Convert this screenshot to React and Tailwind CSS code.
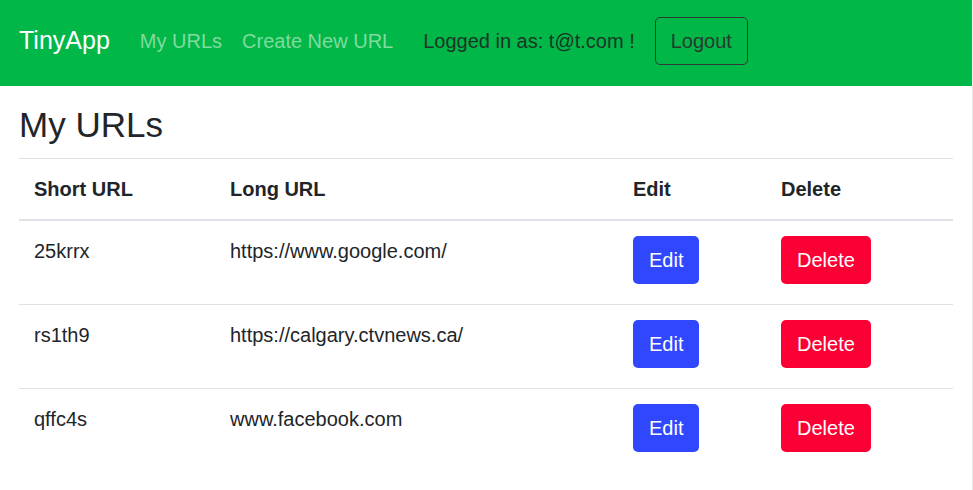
const urls = [
  { id: '25krrx', longURL: 'https://www.google.com/' },
  { id: 'rs1th9', longURL: 'https://calgary.ctvnews.ca/' },
  { id: 'qffc4s', longURL: 'www.facebook.com' },
];

export default function App() {
  return (
    <div className="flex min-h-screen bg-white font-['Liberation_Sans',Arial,sans-serif] text-[20px] leading-[1.5] text-[#212529]">
      <div className="flex-1">
        {/* Navbar */}
        <nav className="flex h-[86px] items-center bg-[#00b748] pl-[19px] pb-[4px]">
          <a href="#" className="mr-[20px] text-[25px] leading-[1.5] text-white">TinyApp</a>
          <a href="#" className="px-[10px] text-[#80db9f]">My URLs</a>
          <a href="#" className="px-[10px] text-[#80db9f]">Create New URL</a>
          <span className="ml-[20px] text-[#1b3526]">Logged in as: t@t.com !</span>
          <button className="ml-[20px] h-[48px] rounded-[5px] border border-[#2e3a33] px-[15px] text-[20px] text-[#263a2e]">
            Logout
          </button>
        </nav>

        {/* Content */}
        <main className="px-[19px] pt-[18px]">
          <h1 className="mb-[12px] text-[35px] leading-[42px] font-normal">My URLs</h1>
          <table className="w-full table-fixed border-collapse">
            <colgroup>
              <col className="w-[196px]" />
              <col className="w-[403px]" />
              <col className="w-[148px]" />
              <col />
            </colgroup>
            <thead>
              <tr>
                <th className="border-t border-b-2 border-[#dee2e6] px-[15px] py-[15px] text-left font-bold">Short URL</th>
                <th className="border-t border-b-2 border-[#dee2e6] px-[15px] py-[15px] text-left font-bold">Long URL</th>
                <th className="border-t border-b-2 border-[#dee2e6] px-[15px] py-[15px] text-left font-bold">Edit</th>
                <th className="border-t border-b-2 border-[#dee2e6] px-[15px] py-[15px] text-left font-bold">Delete</th>
              </tr>
            </thead>
            <tbody>
              {urls.map((url, idx) => (
                <tr key={url.id} className={idx > 0 ? 'border-t border-[#dee2e6]' : ''}>
                  <td className="px-[15px] pt-[15px] pb-[20px] align-top">{url.id}</td>
                  <td className="px-[15px] pt-[15px] pb-[20px] align-top">{url.longURL}</td>
                  <td className="px-[15px] pt-[15px] pb-[20px] align-top">
                    <button className="block h-[48px] rounded-[5px] border border-transparent bg-[#3047ff] px-[15px] text-[20px] text-white">Edit</button>
                  </td>
                  <td className="px-[15px] pt-[15px] pb-[20px] align-top">
                    <button className="block h-[48px] rounded-[5px] border border-transparent bg-[#fb0034] px-[15px] text-[20px] text-white">Delete</button>
                  </td>
                </tr>
              ))}
            </tbody>
          </table>
        </main>
      </div>
      <div className="flex w-[1px] flex-col">
        <div className="h-[86px] bg-[#f4f4f4]" />
        <div className="flex-1 bg-[#e6e6e6]" />
      </div>
    </div>
  );
}
